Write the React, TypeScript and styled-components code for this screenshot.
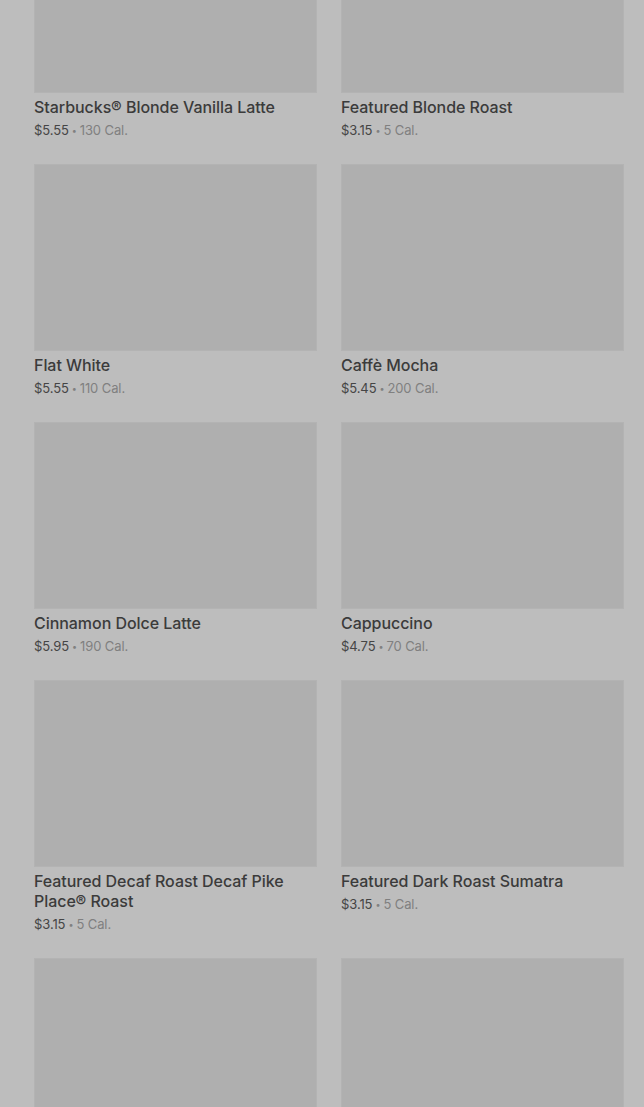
import React from "react";
import styled, { createGlobalStyle } from "styled-components";

const Global = createGlobalStyle`
  html, body { margin: 0; padding: 0; background: #bdbdbd; }
  body { font-family: Inter, "Noto Sans", sans-serif; overflow: hidden; }
`;

const Page = styled.div`
  width: 644px;
  height: 1107px;
  overflow: hidden;
  background: #bdbdbd;
`;

const Grid = styled.div`
  display: grid;
  grid-template-columns: 283px 283px;
  column-gap: 24px;
  row-gap: 24px;
  padding: 0 20px 0 34px;
  margin-top: -94px;
`;

const Card = styled.div`
  display: flex;
  flex-direction: column;
`;

const Thumb = styled.div`
  height: 187px;
  background: #afafaf;
  box-shadow: inset 0 0 0 1px #b3b3b3;
`;

const Title = styled.div`
  margin-top: 4px;
  font-size: 16px;
  line-height: 20px;
  font-weight: 500;
  color: #3b3b3b;
  letter-spacing: -0.05px;
`;

const Meta = styled.div`
  margin-top: 4px;
  font-size: 13px;
  line-height: 18px;
  color: #808080;
  letter-spacing: -0.1px;
`;

const Price = styled.span`
  color: #454545;
`;

const Dot = styled.span`
  font-size: 9px;
  margin: 0 3px;
  vertical-align: 1px;
`;

const items = [
  ["Starbucks® Blonde Vanilla Latte", "$5.55", "130 Cal."],
  ["Featured Blonde Roast", "$3.15", "5 Cal."],
  ["Flat White", "$5.55", "110 Cal."],
  ["Caffè Mocha", "$5.45", "200 Cal."],
  ["Cinnamon Dolce Latte", "$5.95", "190 Cal."],
  ["Cappuccino", "$4.75", "70 Cal."],
  ["Featured Decaf Roast Decaf Pike Place® Roast", "$3.15", "5 Cal."],
  ["Featured Dark Roast Sumatra", "$3.15", "5 Cal."],
  ["", "", ""],
  ["", "", ""],
];

export default function App() {
  return (
    <Page>
      <Global />
      <Grid>
        {items.map(([t, p, c], i) => (
          <Card key={i}>
            <Thumb />
            {t && <Title>{t}</Title>}
            {p && (
              <Meta>
                <Price>{p}</Price>
                <Dot>•</Dot>
                {c}
              </Meta>
            )}
          </Card>
        ))}
      </Grid>
    </Page>
  );
}
